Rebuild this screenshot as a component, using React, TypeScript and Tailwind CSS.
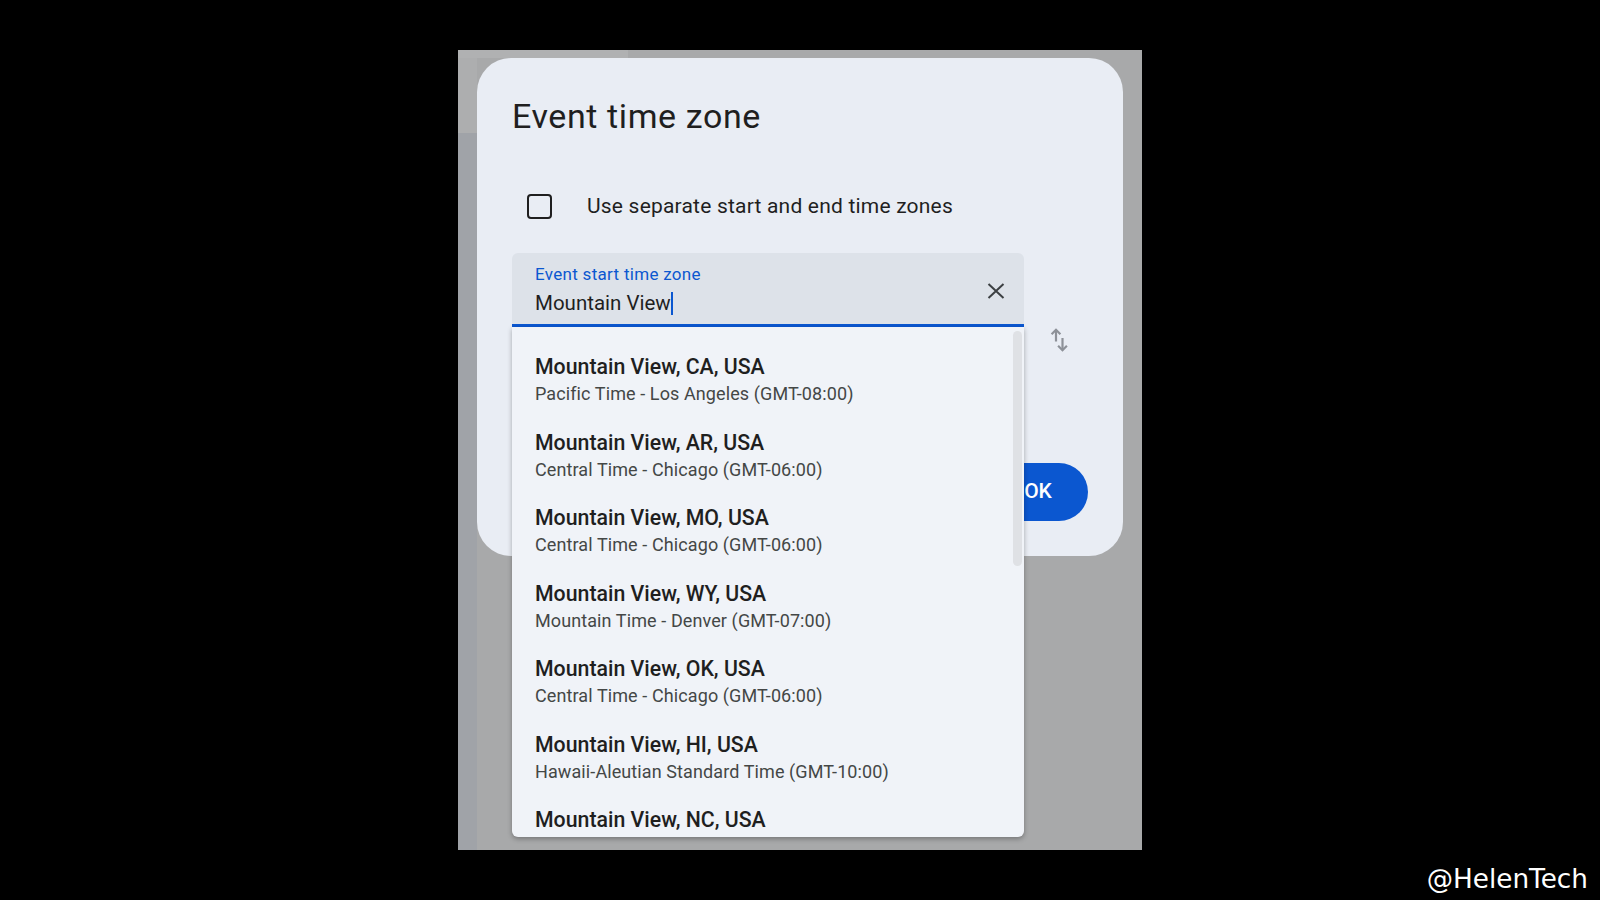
import React from 'react';

const zones = [
  { city: 'Mountain View, CA, USA', zone: 'Pacific Time - Los Angeles (GMT-08:00)' },
  { city: 'Mountain View, AR, USA', zone: 'Central Time - Chicago (GMT-06:00)' },
  { city: 'Mountain View, MO, USA', zone: 'Central Time - Chicago (GMT-06:00)' },
  { city: 'Mountain View, WY, USA', zone: 'Mountain Time - Denver (GMT-07:00)' },
  { city: 'Mountain View, OK, USA', zone: 'Central Time - Chicago (GMT-06:00)' },
  { city: 'Mountain View, HI, USA', zone: 'Hawaii-Aleutian Standard Time (GMT-10:00)' },
  { city: 'Mountain View, NC, USA', zone: '' },
];

const SwapIcon = () => (
  <svg width="24" height="24" viewBox="0 0 24 24" fill="none" stroke="#8d9198" strokeWidth="2.2">
    <path d="M9 13.5V1.8" />
    <path d="M4.6 6.2L9 1.8l4.4 4.4" />
    <path d="M15.5 10v12.2" />
    <path d="M11.1 17.8l4.4 4.4 4.4-4.4" />
  </svg>
);

const ClearIcon = () => (
  <svg width="24" height="24" viewBox="0 0 24 24" fill="none" stroke="#3c4043" strokeWidth="2">
    <path d="M4.5 5l15 14M19.5 5l-15 14" />
  </svg>
);

export default function App() {
  return (
    <div className="relative w-[1600px] h-[900px] bg-black overflow-hidden font-['Roboto',sans-serif]">
      <div className="pl-[458px] pt-[50px]">
        {/* phone screen behind the scrim */}
        <div className="relative w-[684px] h-[800px] bg-[#a8a9aa] pt-[8px] px-[19px]">
          <div className="absolute left-0 top-0 w-[170px] h-[8px] bg-[#b0b1b2]" />
          <div className="absolute left-0 top-[8px] w-[19px] h-[75px] bg-[#adaeaf]" />
          <div className="absolute left-0 top-[83px] w-[19px] h-[717px] bg-[#a0a3a8]" />

          {/* dialog */}
          <div className="relative flex flex-col w-[646px] h-[498px] rounded-[34px] bg-[#e9edf4] px-[35px] pt-[38px] pb-[35px]">
            <h1 className="text-[34px] leading-[40px] tracking-[0.6px] text-[#1f1f1f] font-normal">Event time zone</h1>

            <div className="flex items-center h-[40px] mt-[50px]">
              <div className="ml-[15px] w-[25px] h-[25px] rounded-[4px] border-[2.7px] border-[#1f1f1f]" />
              <span className="ml-[35px] text-[21px] leading-[28px] tracking-[0.2px] text-[#1f1f1f]">
                Use separate start and end time zones
              </span>
            </div>

            <div className="flex items-start mt-[27px]">
              <div className="relative w-[512px]">
                <div className="flex h-[74px] bg-[#dde2e9] rounded-t-[6px] border-b-[3px] border-[#0b57d0]">
                  <div className="flex-1 pl-[23px] pt-[12px]">
                    <div className="text-[17px] leading-[18px] tracking-[0.3px] text-[#0b57d0]">Event start time zone</div>
                    <div className="mt-[6px] flex items-center text-[20.5px] leading-[28px] text-[#1f1f1f]">
                      <span>Mountain View</span>
                      <span className="w-[2px] h-[23px] bg-[#0b57d0]" />
                    </div>
                  </div>
                  <div className="flex items-center pr-[16px] pt-[4px]">
                    <ClearIcon />
                  </div>
                </div>

                {/* suggestions */}
                <div className="absolute z-10 left-0 top-full w-[512px] h-[510px] bg-[#f0f3f8] rounded-b-[6px] shadow-[0_2px_5px_rgba(0,0,0,0.3)] overflow-hidden pt-[15px]">
                  {zones.map((z) => (
                    <div key={z.city} className="h-[75.5px] pl-[23px] pt-[11px]">
                      <div className="text-[21.3px] leading-[28px] font-medium text-[#1f1f1f]">{z.city}</div>
                      {z.zone && (
                        <div className="text-[18px] leading-[26px] tracking-[0.1px] text-[#444746]">{z.zone}</div>
                      )}
                    </div>
                  ))}
                  <div className="absolute right-[2px] top-[4px] w-[9px] h-[235px] rounded-full bg-[#dfe1e5]" />
                </div>
              </div>
              <div className="ml-[23px] mt-[75px]">
                <SwapIcon />
              </div>
            </div>

            <div className="mt-auto flex justify-end">
              <button className="w-[100px] h-[58px] rounded-full bg-[#0b57d0] text-white text-[21px] font-medium">
                OK
              </button>
            </div>
          </div>
        </div>
      </div>

      <div className="absolute right-[12px] bottom-[6px] font-['DejaVu_Sans',sans-serif] text-[26.3px] leading-[30px] text-white">
        @HelenTech
      </div>
    </div>
  );
}
